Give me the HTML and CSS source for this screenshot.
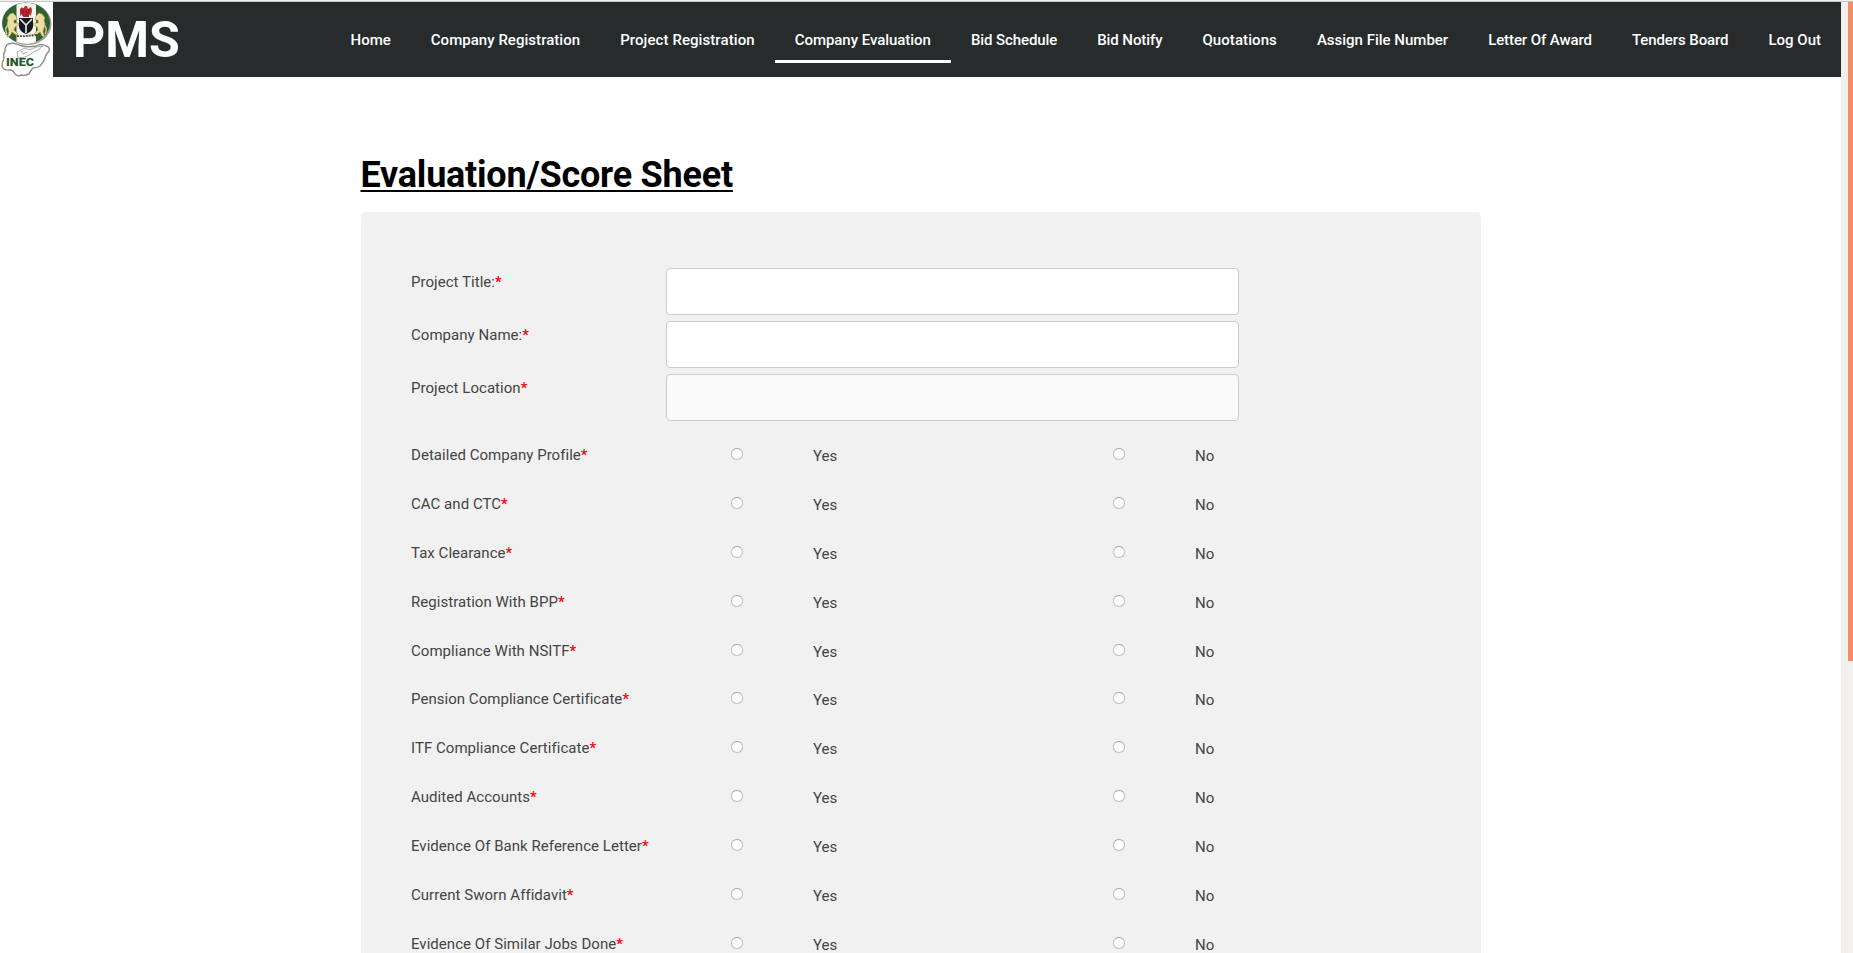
FILE: index.html
```html
<!DOCTYPE html>
<html lang="en">
<head>
<meta charset="utf-8">
<title>PMS</title>
<link rel="stylesheet" href="styles.css">
</head>
<body>
<div class="window">
<div class="page">
<header class="header">
  <svg class="logo" viewBox="0 0 53 75" width="53" height="75">
    <rect width="53" height="75" fill="#fff"/>
    <ellipse cx="27.500" cy="22" rx="24" ry="21" fill="#888" opacity=".8"/>
    <ellipse cx="26" cy="21" rx="24" ry="20.500" fill="#2e6231"/>
    <path d="M16.500 2.500Q26-1 36 2.500V40Q26 43.500 16.500 40Z" fill="#f4f5ee"/>
    <path d="M20 7l2-2 1 2 2-3 2 0 1 3 3-2 1 3-1 6-2-2 0 3h-6l-1-3-2 2z" fill="#bd2630"/>
    <path d="M23 6v8M28.500 7v7M26 8v6" stroke="#6b1a20" stroke-width=".8"/>
    <path d="M19 16h14v9q-1 5-7 7q-6-2-7-7z" fill="#15191d"/>
    <path d="M20 17l6 6 6-6M26 23v8" fill="none" stroke="#dfe2e5" stroke-width="1.700"/>
    <g id="horse"><path d="M10 12l3-1 3 3 1 4-3 0 0 3 4 0 1 2-4 2-1 3 4 4-2 1-4-3-2 4-3 1 2-5-1-4-1-4 1-4-1-2z" fill="#ecdca2" stroke="#a99045" stroke-width=".6"/><path d="M8 23q-4 4-1 9" fill="none" stroke="#dcca86" stroke-width="1.300"/></g>
    <use href="#horse" transform="matrix(-1 0 0 1 52 0)"/>
    <path d="M11 33q8 2 15 1t15-1" fill="none" stroke="#48542a" stroke-width="2" stroke-dasharray="2 1"/>
    <path d="M18 35h17v5q-8 3-17 0z" fill="#fff"/>
    <path d="M8 42q6-2 11 1 8 3 17 1 5-3 10 0 4 1 3 5l-3 4q-2 7-6 11-3 2-7 2-3 3-4 6-4 2-8 1-3 2-6-1-2-4-5-4-6 1-8-4 0-4 2-8-1-4 1-7 0-5 3-7z" fill="#fff" stroke="#8b8f8b" stroke-width="1.400" stroke-linejoin="round"/>
    <path d="M17 50l8-4 4 2q8-4 14-4l-5 4q-4 1-7 4l-6 3-7 1zM21 49l2 3 4-2" fill="none" stroke="#8e928e" stroke-width=".8"/>
    <text x="6" y="64" class="logo-text" textLength="28" lengthAdjust="spacingAndGlyphs">INEC</text>
  </svg>
  <h1 class="brand">PMS</h1>
  <nav class="nav">
    <a>Home</a><a class="looser">Company Registration</a><a class="loose">Project Registration</a><a class="active">Company Evaluation</a><a class="tight">Bid Schedule</a><a class="tight">Bid Notify</a><a class="loose">Quotations</a><a>Assign File Number</a><a class="tight">Letter Of Award</a><a class="tight">Tenders Board</a><a>Log Out</a>
  </nav>
</header>
<main class="content">
  <h2 class="title">Evaluation/Score Sheet</h2>
  <form class="card">
    <div class="field"><label>Project Title:<b>*</b></label><input class="input" type="text"></div>
    <div class="field"><label>Company Name:<b>*</b></label><input class="input" type="text"></div>
    <div class="field"><label>Project Location<b>*</b></label><input class="input readonly" type="text" readonly></div>
    <div class="choices">
      <div class="choice"><label>Detailed Company Profile<b>*</b></label><div class="option"><i class="radio"></i><span>Yes</span></div><div class="option"><i class="radio"></i><span>No</span></div></div>
      <div class="choice"><label>CAC and CTC<b>*</b></label><div class="option"><i class="radio"></i><span>Yes</span></div><div class="option"><i class="radio"></i><span>No</span></div></div>
      <div class="choice"><label>Tax Clearance<b>*</b></label><div class="option"><i class="radio"></i><span>Yes</span></div><div class="option"><i class="radio"></i><span>No</span></div></div>
      <div class="choice"><label>Registration With BPP<b>*</b></label><div class="option"><i class="radio"></i><span>Yes</span></div><div class="option"><i class="radio"></i><span>No</span></div></div>
      <div class="choice"><label>Compliance With NSITF<b>*</b></label><div class="option"><i class="radio"></i><span>Yes</span></div><div class="option"><i class="radio"></i><span>No</span></div></div>
      <div class="choice"><label>Pension Compliance Certificate<b>*</b></label><div class="option"><i class="radio"></i><span>Yes</span></div><div class="option"><i class="radio"></i><span>No</span></div></div>
      <div class="choice"><label>ITF Compliance Certificate<b>*</b></label><div class="option"><i class="radio"></i><span>Yes</span></div><div class="option"><i class="radio"></i><span>No</span></div></div>
      <div class="choice"><label>Audited Accounts<b>*</b></label><div class="option"><i class="radio"></i><span>Yes</span></div><div class="option"><i class="radio"></i><span>No</span></div></div>
      <div class="choice"><label>Evidence Of Bank Reference Letter<b>*</b></label><div class="option"><i class="radio"></i><span>Yes</span></div><div class="option"><i class="radio"></i><span>No</span></div></div>
      <div class="choice"><label>Current Sworn Affidavit<b>*</b></label><div class="option"><i class="radio"></i><span>Yes</span></div><div class="option"><i class="radio"></i><span>No</span></div></div>
      <div class="choice"><label>Evidence Of Similar Jobs Done<b>*</b></label><div class="option"><i class="radio"></i><span>Yes</span></div><div class="option"><i class="radio"></i><span>No</span></div></div>
    </div>
  </form>
</main>
</div>
<div class="scrollbar"><div class="thumb"></div></div>
</div>
</body>
</html>
```
FILE: styles.css
```css
* { box-sizing: border-box; }
body { margin: 0; background: #fff; color: #444; font: 15px/24px Roboto, sans-serif; overflow: hidden; }
.window { display: flex; height: 953px; border-top: 1px solid #efefed; overflow: hidden; }
.page { width: 1841px; border-top: 1px solid #c3c8c5; overflow: hidden; }
.header { display: flex; height: 75px; background: #272b2c; color: #fff; }
.logo { flex: none; display: block; }
.logo-text { font: 900 10.5px Roboto, sans-serif; fill: #1f5a2b; }
.brand { margin: 0 0 0 20px; padding-top: 1px; font-size: 50px; font-weight: 700; line-height: 75px; }
.nav { display: flex; margin-left: auto; }
.nav a { height: 61px; padding: 25px 20px 0; font-weight: 500; line-height: 26px; white-space: nowrap; }
.nav .active { border-bottom: 3px solid #fff; letter-spacing: -.04px; }
.nav .tight { letter-spacing: -.09px; }
.nav .loose { letter-spacing: .08px; }
.nav .looser { letter-spacing: .04px; }
.content { width: 1120px; margin: 0 auto; padding-top: 74px; }
.title { margin: 0; font-size: 36px; line-height: 48px; font-weight: 700; letter-spacing: -.23px; color: #000; text-decoration: underline; text-decoration-thickness: 2px; text-underline-offset: 3px; }
.card { height: 1200px; margin-top: 13px; padding: 56px 50px 0; border-radius: 5px; background: #f1f1f1; }
label { padding-left: .5px; letter-spacing: .04px; }
label b { color: #f00; font-weight: 500; }
.field { display: flex; height: 53px; }
.field label { width: 255px; padding-top: 2px; white-space: nowrap; }
.input { width: 573px; height: 47px; padding: 12px; border: 1px solid #ccc; border-radius: 4px; background: #fff; font: inherit; }
.readonly { background: #fafafa; }
.choices { padding-top: 14px; }
.choice { display: grid; grid-template-columns: 255px 382px 382px; height: 48.9px; }
.choice label { padding-top: 2px; white-space: nowrap; }
.option { display: flex; align-items: flex-start; padding: 7px 0 0 65px; gap: 70.5px; }
.option span { margin-top: -4px; }
.radio { width: 12px; height: 12px; border: 1px solid #c4c4c4; border-top-color: #aaa; border-radius: 50%; background: #fff; box-shadow: 0 0 1px #ccc; }
.scrollbar { display: flex; justify-content: flex-end; width: 12px; border-top: 1px solid #c3c8c5; background: #f1f0ef; }
.thumb { width: 5px; height: 659px; background: #f18e68; }
```
